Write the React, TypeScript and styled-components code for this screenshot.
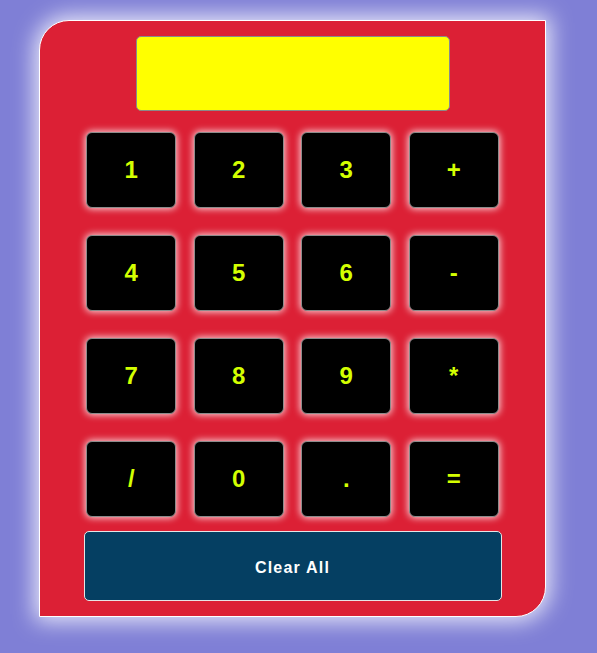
import React from "react";
import styled, { createGlobalStyle } from "styled-components";

const Global = createGlobalStyle`
  html, body {
    margin: 0;
    padding: 0;
    background: #7f7fd6;
    font-family: "Liberation Sans", Arial, sans-serif;
  }
`;

const Page = styled.div`
  padding: 20px 0 0 39px;
  min-height: 633px;
`;

const Calculator = styled.div`
  box-sizing: border-box;
  width: 507px;
  height: 597px;
  background: #dc2035;
  border: 1px solid #ffffff;
  border-radius: 30px 0 30px 0;
  box-shadow: 0 0 22px 4px rgba(255, 255, 255, 0.85);
  padding: 15px 0;
  display: flex;
  flex-direction: column;
  align-items: center;
`;

const Display = styled.div`
  box-sizing: border-box;
  width: 314px;
  height: 75px;
  background: #ffff00;
  border: 1px solid #8a8a8a;
  border-radius: 5px;
`;

const Keypad = styled.div`
  margin-top: 21px;
  display: grid;
  grid-template-columns: repeat(4, 90px);
  grid-auto-rows: 76px;
  column-gap: 17.5px;
  row-gap: 27px;
`;

const Key = styled.button`
  box-sizing: border-box;
  background: #000;
  border: 1px solid #8c8c8c;
  border-radius: 6px;
  box-shadow: 0 0 7px 1px rgba(255, 255, 255, 0.8);
  color: #d4ff00;
  font-family: "Liberation Sans", Arial, sans-serif;
  font-weight: bold;
  font-size: 24px;
  padding: 0;
  display: flex;
  align-items: center;
  justify-content: center;
  cursor: pointer;
`;

const ClearButton = styled.button`
  box-sizing: border-box;
  margin-top: 14px;
  width: 418px;
  height: 70px;
  background: #053f62;
  border: 1px solid #e6e6e6;
  border-radius: 5px;
  color: #ffffff;
  font-family: "Liberation Sans", Arial, sans-serif;
  font-weight: bold;
  font-size: 16px;
  letter-spacing: 1.2px;
  padding: 4px 0 0;
  cursor: pointer;
`;

const keys = ["1", "2", "3", "+", "4", "5", "6", "-", "7", "8", "9", "*", "/", "0", ".", "="];

export default function App() {
  return (
    <>
      <Global />
      <Page>
        <Calculator>
          <Display />
          <Keypad>
            {keys.map((k) => (
              <Key key={k}>{k}</Key>
            ))}
          </Keypad>
          <ClearButton>Clear All</ClearButton>
        </Calculator>
      </Page>
    </>
  );
}
